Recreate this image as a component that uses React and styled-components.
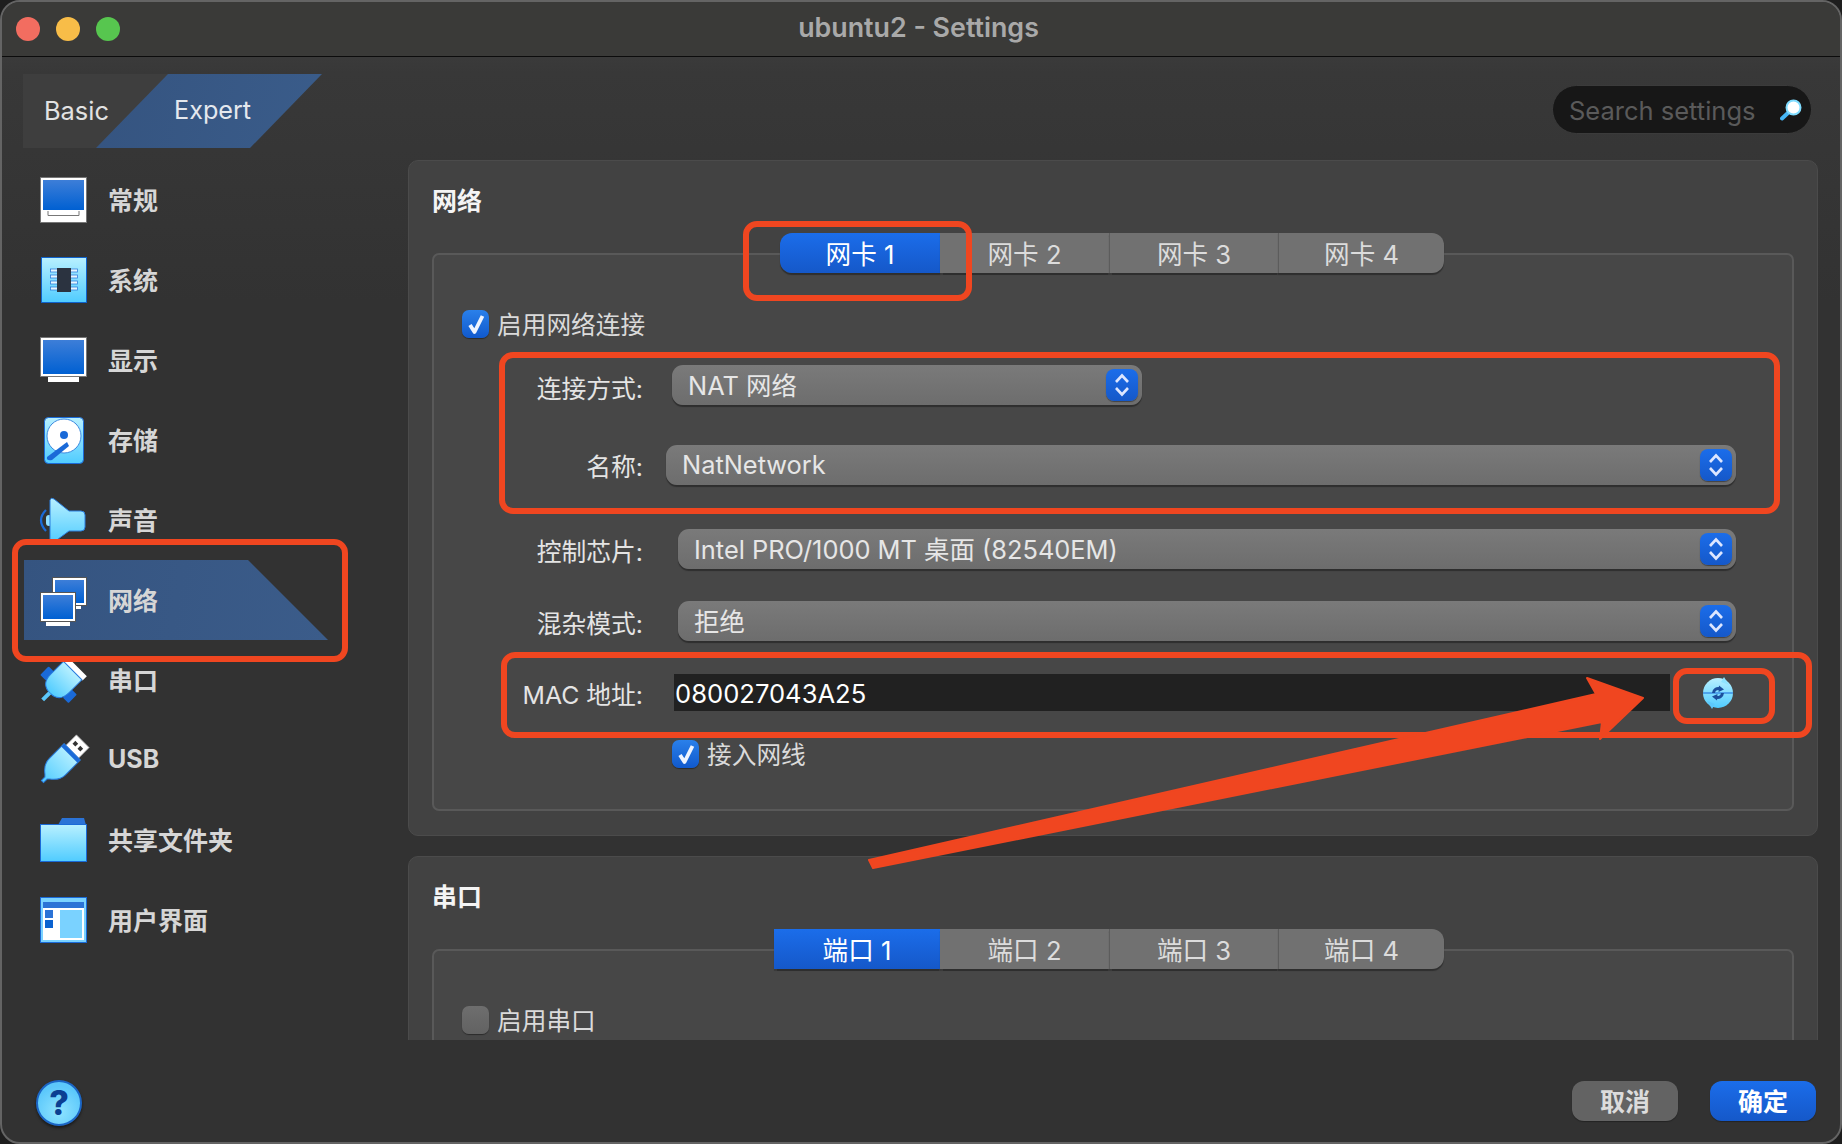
import React from "react";
import styled, { createGlobalStyle } from "styled-components";

const FONT = `Inter, "Noto Sans CJK SC", sans-serif`;
const RED = "#f04620";

const Global = createGlobalStyle`
  html, body { margin: 0; padding: 0; background: #1e1e1e; }
  body { font-family: ${FONT}; }
`;

const Window = styled.div`
  position: relative;
  box-sizing: border-box;
  width: 1842px;
  height: 1144px;
  display: flex;
  flex-direction: column;
  overflow: hidden;
  border: 2px solid #646464;
  border-radius: 20px;
  background: linear-gradient(#3a3a3a 57px, #383838 70px, #323232 300px);
`;

const TitleBar = styled.header`
  position: relative;
  box-sizing: border-box;
  height: 55px;
  flex: none;
  display: flex;
  align-items: center;
  padding-left: 14px;
  gap: 16px;
  background: #3a3a38;
  border-bottom: 1.5px solid #0c0c0c;
`;

const Light = styled.span`
  width: 24px;
  height: 24px;
  border-radius: 50%;
  background: ${(p) => p.$color};
`;

const Title = styled.h1`
  flex: 1;
  margin: 0 0 4px -139px;
  text-align: center;
  font-size: 26.8px;
  font-weight: 600;
  color: #a9a9a9;
`;

const Body = styled.div`
  flex: 1;
  display: flex;
  min-height: 0;
`;

const Sidebar = styled.aside`
  width: 406px;
  flex: none;
  display: flex;
  flex-direction: column;
  padding: 17px 0 16px;
  box-sizing: border-box;
`;

const Segment = styled.div`
  display: flex;
  height: 74px;
  margin-left: 21px;
  flex: none;
`;

const Basic = styled.div`
  width: 145px;
  box-sizing: border-box;
  padding: 0 0 2px 21px;
  display: flex;
  align-items: center;
  background: #3e3e3e;
  color: #e2e2e2;
  font-size: 25.4px;
`;

const Expert = styled.div`
  width: 226px;
  margin-left: -72px;
  box-sizing: border-box;
  padding: 0 0 2px 78px;
  display: flex;
  align-items: center;
  background: linear-gradient(100deg, #355480, #3a5c8a);
  clip-path: polygon(72px 0, 100% 0, 154px 100%, 0 100%);
  color: #e4e8ee;
  font-size: 25.2px;
`;

const Nav = styled.nav`
  margin-top: 12px;
  display: flex;
  flex-direction: column;
`;

const NavItem = styled.div`
  width: 304px;
  height: 80px;
  margin-left: 22px;
  box-sizing: border-box;
  padding: 0 0 2px 16px;
  display: flex;
  align-items: center;
  gap: 21px;
  font-size: 25px;
  font-weight: 700;
  color: #d6d6d6;
  background: ${(p) => (p.$active ? "linear-gradient(100deg, #355480, #3b5c8a)" : "transparent")};
  clip-path: ${(p) => (p.$active ? "polygon(0 0, 224px 0, 100% 100%, 0 100%)" : "none")};
  svg { flex: none; overflow: visible; margin-top: 2px; }
`;

const Help = styled.div`
  margin: auto 0 0 34px;
  width: 46px;
  height: 46px;
  box-sizing: border-box;
  border-radius: 50%;
  border: 2px solid #1b66c6;
  background: radial-gradient(circle at 50% 70%, #8fe4ff, #5cc8fb 70%);
  box-shadow: 0 2px 3px rgba(0, 0, 0, 0.5);
  display: flex;
  align-items: center;
  justify-content: center;
  color: #0b3f92;
  font-size: 34px;
  font-weight: 800;
  line-height: 1;
`;

const Main = styled.main`
  flex: 1;
  min-width: 0;
  display: flex;
  flex-direction: column;
  box-sizing: border-box;
  padding: 28px 22px 0 0;
`;

const SearchBox = styled.div`
  align-self: flex-end;
  margin-right: 6px;
  width: 260px;
  height: 49px;
  box-sizing: border-box;
  flex: none;
  padding: 1px 9px 0 16px;
  display: flex;
  align-items: center;
  justify-content: space-between;
  background: #171717;
  border: 1.5px solid #3b3b3b;
  border-radius: 25px;
  color: #5a5a5a;
  font-size: 25.5px;
`;

const Scroller = styled.div`
  margin-top: 26px;
  height: 880px;
  flex: none;
  overflow: hidden;
  display: flex;
  flex-direction: column;
  gap: 20px;
`;

const Panel = styled.section`
  flex: none;
  box-sizing: border-box;
  padding: 24px 23px;
  background: #424242;
  border: 1px solid #4b4b4b;
  border-radius: 10px;
`;

const PanelTitle = styled.h2`
  margin: 0 0 36px 0;
  height: 32px;
  line-height: 32px;
  font-size: 25px;
  font-weight: 700;
  color: #f4f4f4;
`;

const Frame = styled.div`
  box-sizing: border-box;
  height: ${(p) => p.$height}px;
  background: #474747;
  border: 2px solid #595959;
  border-radius: 7px;
`;

const Tabs = styled.div`
  display: flex;
  justify-content: flex-end;
  margin-top: -22px;
  padding-right: 348px;
`;

const Tab = styled.div`
  width: ${(p) => p.$w}px;
  height: 40px;
  box-sizing: border-box;
  padding-bottom: 2px;
  display: flex;
  align-items: center;
  justify-content: center;
  font-size: 25.6px;
  color: ${(p) => (p.$active ? "#ffffff" : "#dcdcdc")};
  background: ${(p) => (p.$active ? "linear-gradient(#1b6dea, #1558c9)" : "#717171")};
  border-left: ${(p) => (p.$active || p.$first ? "none" : "1.5px solid #5c5c5c")};
  border-radius: ${(p) => (p.$roundLeft ? "12px 0 0 12px" : p.$roundRight ? "0 12px 12px 0" : "0")};
  box-shadow: 0 1.5px 1px rgba(0, 0, 0, 0.35);
`;

const CheckRow = styled.label`
  display: flex;
  align-items: center;
  gap: 8px;
  margin: ${(p) => p.$top}px 0 0 ${(p) => p.$left}px;
  height: 28px;
  font-size: 24.7px;
  color: #dadada;
`;

const CheckText = styled.span`
  margin-top: -3px;
`;

const Box = styled.span`
  width: 27px;
  height: 28px;
  flex: none;
  border-radius: 7px;
  display: flex;
  align-items: center;
  justify-content: center;
  background: ${(p) => (p.$on ? "linear-gradient(#2a80ea, #1059cd)" : "linear-gradient(#6e6e6e, #626262)")};
  box-shadow: 0 1px 1px rgba(0, 0, 0, 0.4);
`;

const Row = styled.div`
  display: flex;
  align-items: center;
  margin-top: ${(p) => p.$top}px;
  padding-right: 56px;
`;

const Label = styled.div`
  width: 209px;
  flex: none;
  padding-top: ${(p) => p.$pad}px;
  text-align: right;
  font-size: 24.8px;
  color: #e4e4e4;
  white-space: nowrap;
`;

const Select = styled.div`
  margin-left: ${(p) => p.$left}px;
  ${(p) => (p.$width ? `width: ${p.$width}px; flex: none;` : "flex: 1;")}
  height: 40px;
  box-sizing: border-box;
  padding: 0 4px 0 16px;
  display: flex;
  align-items: center;
  justify-content: space-between;
  border-radius: 11px;
  background: linear-gradient(#7a7a7a, #6d6d6d);
  box-shadow: 0 1.5px 1px rgba(0, 0, 0, 0.35);
  font-size: 25.4px;
  color: #e6e6e6;
  white-space: nowrap;
`;

const SelectText = styled.span`
  margin-top: -2px;
`;

const Stepper = styled.span`
  width: 32px;
  height: 32px;
  flex: none;
  border-radius: 8px;
  background: linear-gradient(#1b6dea, #1558c9);
  box-shadow: 0 1px 1px rgba(0, 0, 0, 0.4);
  display: flex;
`;

const MacInput = styled.div`
  margin-left: 31px;
  flex: 1;
  height: 37px;
  box-sizing: border-box;
  padding: 2px 0 0 1px;
  display: flex;
  align-items: center;
  background: #212121;
  font-size: 25.6px;
  color: #ffffff;
`;

const RefreshButton = styled.div`
  width: 66px;
  flex: none;
  box-sizing: border-box;
  padding-left: 32px;
  display: flex;
`;

const Footer = styled.footer`
  margin: 41px 2px 0 0;
  display: flex;
  justify-content: flex-end;
  gap: 32px;
`;

const Button = styled.button`
  width: 106px;
  height: 40px;
  padding: 0 0 3px;
  border: none;
  border-radius: 12px;
  font-family: ${FONT};
  font-size: 25px;
  font-weight: 700;
  color: ${(p) => (p.$primary ? "#ffffff" : "#dcdcdc")};
  background: ${(p) => (p.$primary ? "linear-gradient(#1b6dea, #1558c9)" : "#636363")};
  box-shadow: 0 1px 1px rgba(0, 0, 0, 0.3);
`;

const Annotations = styled.div`
  position: absolute;
  left: -2px;
  top: -2px;
  width: 1842px;
  height: 1144px;
  pointer-events: none;
`;

const Mark = styled.div`
  position: absolute;
  box-sizing: border-box;
  left: ${(p) => p.$x}px;
  top: ${(p) => p.$y}px;
  width: ${(p) => p.$w}px;
  height: ${(p) => p.$h}px;
  border: 6px solid ${RED};
  border-radius: 14px;
`;

const ArrowSvg = styled.svg`
  position: absolute;
  left: 0;
  top: 0;
`;

const Hidden = styled.svg`
  position: absolute;
  width: 0;
  height: 0;
`;

const Gradients = () => (
  <Hidden aria-hidden="true">
    <defs>
      <linearGradient id="scr" x1="0" y1="0" x2="0" y2="1">
        <stop offset="0" stopColor="#3d7ed8" />
        <stop offset="1" stopColor="#0060d2" />
      </linearGradient>
      <linearGradient id="cy" x1="0" y1="0" x2="0" y2="1">
        <stop offset="0" stopColor="#b8f0ff" />
        <stop offset="1" stopColor="#50ccff" />
      </linearGradient>
    </defs>
  </Hidden>
);

const Ic = ({ children }) => (
  <svg width="47" height="47" viewBox="0 0 47 47">{children}</svg>
);

const GeneralIcon = () => (
  <Ic>
    <rect x="0.5" y="0.5" width="46" height="45" fill="#fff" stroke="#777" />
    <rect x="3" y="3" width="41" height="30" fill="url(#scr)" />
    <path d="M8 34v4.5h31V34" fill="none" stroke="#777" strokeWidth="1" />
  </Ic>
);
const SystemIcon = () => (
  <Ic>
    <rect x="1.5" y="0.5" width="45" height="45" fill="url(#cy)" stroke="#0f62cc" />
    {[12, 18, 24, 30].map((y) => (
      <rect key={y} x="10.5" y={y} width="27" height="3" fill="#e6f6ff" stroke="#2f7fdc" strokeWidth="0.8" />
    ))}
    <rect x="17" y="11" width="14" height="24" fill="#2b3340" />
  </Ic>
);
const DisplayIcon = () => (
  <Ic>
    <rect x="0.5" y="0.5" width="46" height="39" fill="#fff" stroke="#777" />
    <rect x="3" y="3" width="41" height="34" fill="url(#scr)" />
    <rect x="8" y="40" width="31" height="5" fill="#fff" />
  </Ic>
);
const StorageIcon = () => (
  <Ic>
    <rect x="4.5" y="0.5" width="39" height="46" rx="4" fill="url(#cy)" stroke="#1a6ad8" />
    <circle cx="24" cy="19" r="17" fill="#fff" stroke="#3d8ae0" />
    <circle cx="24" cy="18" r="4" fill="#1a6ad8" />
    <path d="M7 40 L27 25 L29 29 L12 43 Q6 44 7 40Z" fill="#1a6ad8" />
  </Ic>
);
const AudioIcon = () => (
  <Ic>
    <path d="M6 13 Q-4 23 6 34" fill="none" stroke="#1a6ad8" strokeWidth="2.2" />
    <rect x="6" y="18" width="6" height="11" rx="3" fill="#8fdfff" />
    <path d="M10 3Q11 0 14 2L29 14H41Q45 14 45 18V30Q45 34 41 34H29L14 45Q11 47 10 44Z" fill="url(#cy)" stroke="#2a7ee0" />
  </Ic>
);
const NetworkIcon = () => (
  <Ic>
    <rect x="12.5" y="0.5" width="34" height="28" fill="#fff" stroke="#555" />
    <rect x="15" y="3" width="29" height="23" fill="url(#scr)" />
    <rect x="36" y="29" width="5" height="3" fill="#fff" />
    <rect x="0.5" y="15.5" width="35" height="29" fill="#fff" stroke="#555" />
    <rect x="3" y="18" width="30" height="24" fill="url(#scr)" />
    <rect x="6" y="45" width="24" height="4" fill="#fff" />
  </Ic>
);
const SerialIcon = () => (
  <Ic>
    <g transform="rotate(45 23.5 23.5)">
      <rect x="9" y="4" width="28" height="6" fill="#fff" />
      <rect x="3" y="24" width="8" height="12" rx="1" fill="#1a6ad8" />
      <rect x="35" y="24" width="8" height="12" rx="1" fill="#1a6ad8" />
      <path d="M10 10H36V28Q36 42 23 42Q10 42 10 28Z" fill="url(#cy)" stroke="#2a7ee0" />
      <rect x="20.5" y="42" width="4" height="10" fill="#5cc8fb" />
    </g>
  </Ic>
);
const UsbIcon = () => (
  <Ic>
    <g transform="translate(-3 3) rotate(45 23.5 23.5)">
      <rect x="14.5" y="-8" width="18" height="15" fill="#fff" stroke="#999" strokeWidth="0.8" />
      <rect x="18" y="-3" width="4" height="4" fill="#333" />
      <rect x="25" y="-3" width="4" height="4" fill="#333" />
      <path d="M12 7H35V28Q35 36 27 42L25 44V49H22V44L20 42Q12 36 12 28Z" fill="url(#cy)" stroke="#2a7ee0" />
      <rect x="12" y="7" width="23" height="4" fill="#1a6ad8" />
    </g>
  </Ic>
);
const FolderIcon = () => (
  <Ic>
    <path d="M18 8L22 1H44L46 8Z" fill="#2b73d6" />
    <rect x="0.5" y="7.5" width="46" height="37" fill="url(#cy)" stroke="#1a6ad8" />
  </Ic>
);
const UiIcon = () => (
  <Ic>
    <rect x="0.5" y="0.5" width="46" height="45" fill="#7ad2ff" stroke="#1a6ad8" />
    <rect x="3" y="5" width="41" height="38" fill="#fff" />
    <rect x="3" y="5" width="41" height="6" fill="#2b73d6" />
    <rect x="5" y="13" width="8" height="8" fill="#2b73d6" />
    <rect x="5" y="23" width="8" height="8" fill="#0a62d0" />
    <rect x="20" y="13" width="22" height="28" fill="#7ad2ff" />
  </Ic>
);

const SearchIcon = () => (
  <svg width="22" height="22" viewBox="0 0 22 22">
    <path d="M2 19.5 L9 13" stroke="#45b6f5" strokeWidth="4" strokeLinecap="round" />
    <circle cx="13.5" cy="8.5" r="7" fill="#fff" stroke="#7fdcff" strokeWidth="2" />
  </svg>
);
const Check = () => (
  <svg width="26" height="26" viewBox="0 0 26 26">
    <path d="M7 14 L11.5 21 L19.5 5" fill="none" stroke="#eef4ff" strokeWidth="3.8" strokeLinejoin="round" />
  </svg>
);
const Chevrons = () => (
  <svg width="32" height="32" viewBox="0 0 32 32">
    <path d="M10 13L16 6.5L22 13M10 19L16 25.5L22 19" fill="none" stroke="#dde6ff" strokeWidth="2.6" />
  </svg>
);
const RefreshIcon = () => (
  <svg width="32" height="32" viewBox="0 0 32 32">
    <circle cx="16" cy="16" r="15" fill="url(#cy)" />
    <path d="M22 0L27 8L19 5Z" fill="#8fe4ff" />
    <path d="M10 32L5 24L13 27Z" fill="#5cc8fb" />
    <path d="M1 16H31" stroke="#2a7ee0" strokeWidth="1.2" />
    <path d="M11.5 16A4.8 4.8 0 0 1 18 11.8M20.5 16A4.8 4.8 0 0 1 14 20.2" fill="none" stroke="#1c4f9c" strokeWidth="3" />
    <path d="M17 8.5L22 12.5L16.5 15Z" fill="#1c4f9c" />
    <path d="M15 23.5L10 19.5L15.5 17Z" fill="#1c4f9c" />
  </svg>
);

const nav = [
  ["常规", GeneralIcon],
  ["系统", SystemIcon],
  ["显示", DisplayIcon],
  ["存储", StorageIcon],
  ["声音", AudioIcon],
  ["网络", NetworkIcon],
  ["串口", SerialIcon],
  ["USB", UsbIcon],
  ["共享文件夹", FolderIcon],
  ["用户界面", UiIcon],
];

const TabRow = ({ name, first, roundLeft }) => (
  <Tabs>
    <Tab $active $w={first} $roundLeft={roundLeft}>{name} 1</Tab>
    <Tab $w={169} $first>{name} 2</Tab>
    <Tab $w={169}>{name} 3</Tab>
    <Tab $w={166} $roundRight>{name} 4</Tab>
  </Tabs>
);

const SelectField = ({ left, width, children }) => (
  <Select $left={left} $width={width}>
    <SelectText>{children}</SelectText>
    <Stepper><Chevrons /></Stepper>
  </Select>
);

export default function App() {
  return (
    <>
      <Global />
      <Gradients />
      <Window>
        <TitleBar>
          <Light $color="#f26d60" />
          <Light $color="#f8bd48" />
          <Light $color="#57c64f" />
          <Title>ubuntu2 - Settings</Title>
        </TitleBar>
        <Body>
          <Sidebar>
            <Segment>
              <Basic>Basic</Basic>
              <Expert>Expert</Expert>
            </Segment>
            <Nav>
              {nav.map(([label, Icon]) => (
                <NavItem key={label} $active={label === "网络"}>
                  <Icon />
                  {label}
                </NavItem>
              ))}
            </Nav>
            <Help>?</Help>
          </Sidebar>
          <Main>
            <SearchBox>
              Search settings
              <SearchIcon />
            </SearchBox>
            <Scroller>
              <Panel>
                <PanelTitle>网络</PanelTitle>
                <Frame $height={558}>
                  <TabRow name="网卡" first={160} roundLeft />
                  <CheckRow $top={37} $left={28}>
                    <Box $on><Check /></Box>
                    <CheckText>启用网络连接</CheckText>
                  </CheckRow>
                  <Row $top={27}>
                    <Label $pad={4}>连接方式:</Label>
                    <SelectField left={29} width={470}>NAT 网络</SelectField>
                  </Row>
                  <Row $top={40}>
                    <Label $pad={0}>名称:</Label>
                    <SelectField left={23}>NatNetwork</SelectField>
                  </Row>
                  <Row $top={44}>
                    <Label $pad={2}>控制芯片:</Label>
                    <SelectField left={35}>Intel PRO/1000 MT 桌面 (82540EM)</SelectField>
                  </Row>
                  <Row $top={32}>
                    <Label $pad={2}>混杂模式:</Label>
                    <SelectField left={35}>拒绝</SelectField>
                  </Row>
                  <Row $top={33}>
                    <Label $pad={0}>MAC 地址:</Label>
                    <MacInput>080027043A25</MacInput>
                    <RefreshButton><RefreshIcon /></RefreshButton>
                  </Row>
                  <CheckRow $top={29} $left={238}>
                    <Box $on><Check /></Box>
                    <CheckText>接入网线</CheckText>
                  </CheckRow>
                </Frame>
              </Panel>
              <Panel>
                <PanelTitle>串口</PanelTitle>
                <Frame $height={300}>
                  <TabRow name="端口" first={166} />
                  <CheckRow $top={37} $left={28}>
                    <Box />
                    <CheckText>启用串口</CheckText>
                  </CheckRow>
                </Frame>
              </Panel>
            </Scroller>
            <Footer>
              <Button>取消</Button>
              <Button $primary>确定</Button>
            </Footer>
          </Main>
        </Body>
        <Annotations>
          <Mark $x={12} $y={539} $w={336} $h={123} />
          <Mark $x={743} $y={221} $w={229} $h={80} />
          <Mark $x={499} $y={352} $w={1281} $h={162} />
          <Mark $x={501} $y={652} $w={1311} $h={86} />
          <Mark $x={1673} $y={668} $w={102} $h={56} />
          <ArrowSvg width="1842" height="1144" viewBox="0 0 1842 1144">
            <path
              d="M1643 698L1600 739L1602 722L873 868L869 860L1596 694L1587 678Z"
              fill={RED}
              stroke={RED}
              strokeWidth="2"
              strokeLinejoin="round"
            />
          </ArrowSvg>
        </Annotations>
      </Window>
    </>
  );
}
